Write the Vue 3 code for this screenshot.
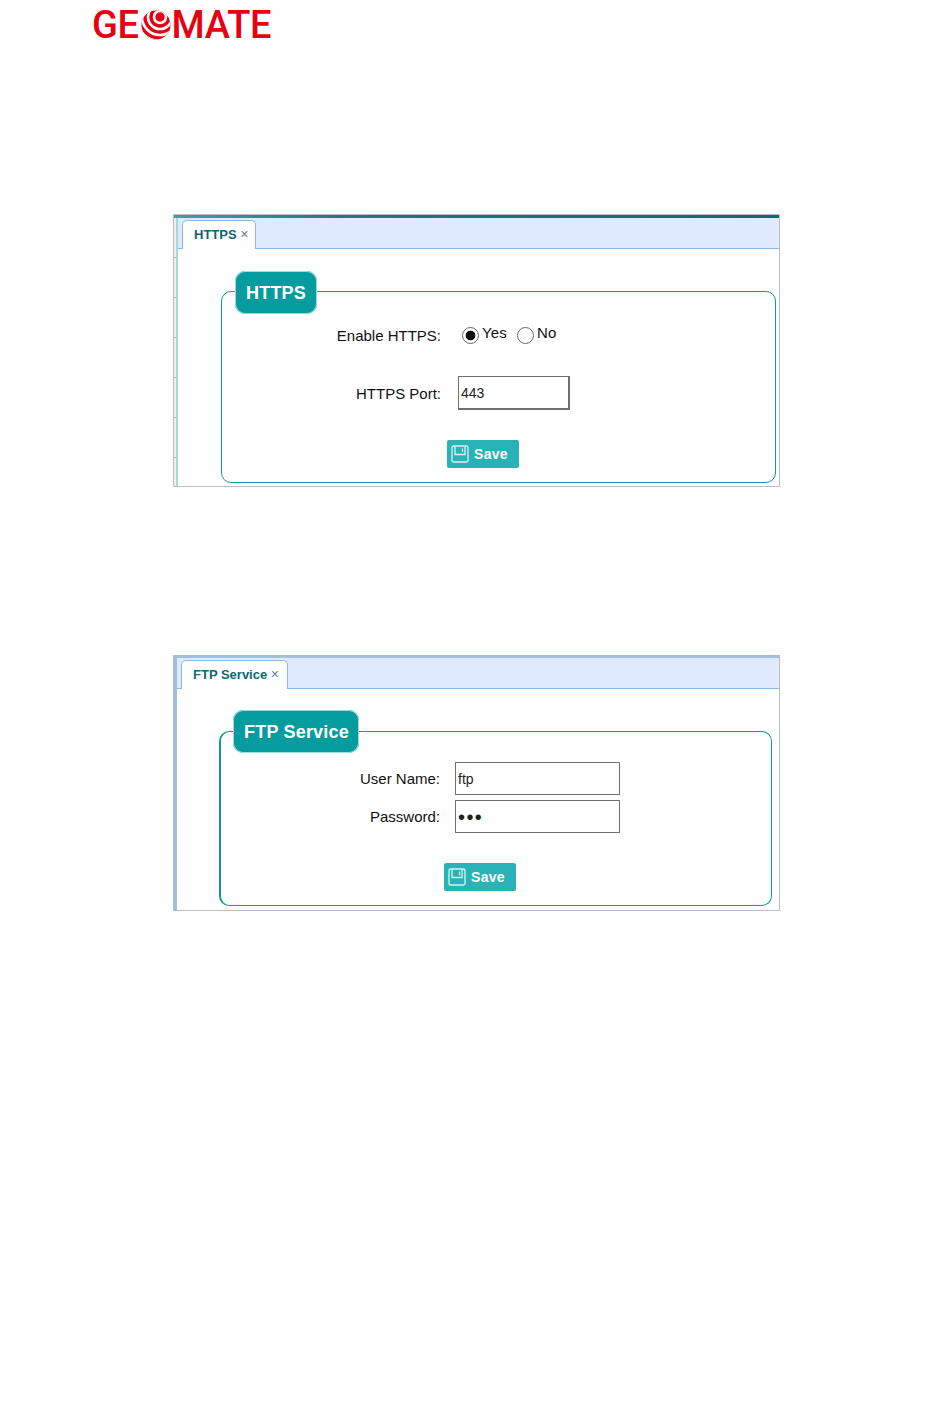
<template>
  <div class="page">
    <div class="logo">
      <span class="logo-text">GE</span>
      <svg class="globe" width="30" height="30" viewBox="0 0 30 30">
        <defs>
          <clipPath id="ball"><circle cx="15" cy="15" r="14.5" /></clipPath>
        </defs>
        <g clip-path="url(#ball)">
          <rect width="30" height="30" fill="#e60012" />
          <g fill="none" stroke="#fff" stroke-width="2.6">
            <circle cx="19" cy="7" r="6" />
            <circle cx="19" cy="7" r="12" />
            <circle cx="19" cy="7" r="18" />
            <circle cx="19" cy="7" r="24" />
          </g>
        </g>
      </svg>
      <span class="logo-text">MATE</span>
    </div>

    <section class="panel panel-https">
      <div class="topline"></div>
      <div class="inner">
        <div class="tabbar">
          <div class="tab">HTTPS <span class="tab-x">×</span></div>
        </div>
        <div class="group">
          <div class="legend">HTTPS</div>
          <div class="form">
            <label class="lbl">Enable HTTPS:</label>
            <div class="radios">
              <span class="radio on"></span><span class="opt">Yes</span>
              <span class="radio"></span><span class="opt">No</span>
            </div>
            <label class="lbl">HTTPS Port:</label>
            <input class="field" type="text" value="443" />
          </div>
          <button class="save">
            <svg width="18" height="18" viewBox="0 0 18 18" fill="none" stroke="#d6f3f3" stroke-width="1.3">
              <rect x="1" y="1" width="16" height="16" rx="1.5" />
              <path d="M4 1.5V9.5H14V1.5M11.5 3.5V7" />
            </svg>
            Save
          </button>
        </div>
      </div>
    </section>

    <section class="panel panel-ftp">
      <div class="inner">
        <div class="tabbar">
          <div class="tab">FTP Service <span class="tab-x">×</span></div>
        </div>
        <div class="group">
          <div class="legend">FTP Service</div>
          <div class="form">
            <label class="lbl">User Name:</label>
            <input class="field" type="text" value="ftp" />
            <label class="lbl">Password:</label>
            <input class="field pass" type="password" value="ftp" />
          </div>
          <button class="save">
            <svg width="18" height="18" viewBox="0 0 18 18" fill="none" stroke="#d6f3f3" stroke-width="1.3">
              <rect x="1" y="1" width="16" height="16" rx="1.5" />
              <path d="M4 1.5V9.5H14V1.5M11.5 3.5V7" />
            </svg>
            Save
          </button>
        </div>
      </div>
    </section>
  </div>
</template>

<script setup>
</script>

<style>
html,
body {
  background: #fff;
}
</style>

<style scoped>
.page {
  width: 950px;
  height: 1408px;
  overflow: hidden;
  background: #fff;
  font-family: "Liberation Sans", Arial, sans-serif;
  color: #111;
}

/* logo */
.logo {
  display: flex;
  align-items: center;
  height: 30px;
  margin: 10px 0 0 92px;
  color: #e60012;
}
.logo-text {
  font-family: Roboto, sans-serif;
  font-weight: 500;
  font-size: 38px;
  line-height: 30px;
  letter-spacing: -0.4px;
}
.globe {
  margin: 0 1px 0 2px;
}

/* panels */
.panel {
  box-sizing: border-box;
  width: 607px;
  margin-left: 173px;
  border: 1px solid #bdbdbd;
}
.panel-https {
  height: 273px;
  margin-top: 174px;
  background: repeating-linear-gradient(180deg, transparent 0 39px, #8fc7c7 39px 40px) left 0 top 3px / 2px 100% no-repeat, #eef1f1;
}
.panel-ftp {
  height: 256px;
  margin-top: 168px;
  border-top: 3px solid #a3bfdc;
  border-left: 4px solid #a3c0d6;
}
.topline {
  height: 3px;
  background: linear-gradient(90deg, #3aa39c 0, #0c7f80 30%, #0a6b73 100%);
}
.panel-https .inner {
  margin-left: 2px;
  height: 268px;
  background: #fff;
  border-left: 2px solid #a4dcdc;
}
.tabbar {
  box-sizing: border-box;
  display: flex;
  align-items: flex-end;
  height: 31px;
  background: #dfeaff;
  border-bottom: 1px solid #8db8ea;
}
.tab {
  box-sizing: border-box;
  height: 29px;
  margin-bottom: -1px;
  margin-left: 4px;
  padding-top: 6px;
  padding-left: 11px;
  background: #fff;
  border: 1px solid #8db8ea;
  border-bottom: none;
  border-radius: 5px 5px 0 0;
  color: #0d6670;
  font-size: 13px;
  font-weight: bold;
  line-height: 15px;
  white-space: nowrap;
}
.panel-https .tab {
  width: 74px;
}
.panel-ftp .tab {
  width: 107px;
}
.tab-x {
  color: #5a7fa5;
  font-weight: normal;
  font-size: 14px;
}

/* group box */
.group {
  box-sizing: border-box;
  border: 1px solid #12989c;
  border-radius: 10px;
}
.panel-https .group {
  height: 192px;
  margin: 42px 3px 0 43px;
}
.panel-ftp .group {
  height: 175px;
  margin: 42px 7px 0 42px;
  border-left-width: 2px;
}
.legend {
  box-sizing: border-box;
  width: max-content;
  height: 43px;
  margin: -21px 0 0 13px;
  padding: 0 11px;
  background: #059c9f;
  border-radius: 10px;
  box-shadow: 0 0 0 1px #9fdcdc inset;
  color: #fff;
  font-size: 18px;
  font-weight: bold;
  line-height: 45px;
  letter-spacing: 0.2px;
}
.panel-ftp .legend {
  margin: -22px 0 0 12px;
  padding-right: 10px;
}

.form {
  display: grid;
  align-items: center;
}
.panel-https .form {
  grid-template-columns: 219px 112px;
  grid-template-rows: 22px 34px;
  column-gap: 17px;
  row-gap: 30px;
  margin-top: 10px;
}
.panel-ftp .form {
  grid-template-columns: 219px 165px;
  grid-template-rows: 33px 33px;
  column-gap: 15px;
  row-gap: 5px;
  margin-top: 9px;
}
.lbl {
  font-size: 15px;
  text-align: right;
}
.radios {
  display: flex;
  align-items: center;
  padding-left: 4px;
  font-size: 15px;
}
.radio {
  box-sizing: border-box;
  flex: none;
  width: 17px;
  height: 17px;
  border: 1px solid #666;
  border-radius: 50%;
  background: #fff;
}
.radio.on {
  background: radial-gradient(circle, #111 0 4.5px, #fff 5.2px);
}
.opt {
  margin: -5px 10px 0 3px;
  letter-spacing: 0.2px;
}
.field {
  box-sizing: border-box;
  width: 100%;
  height: 100%;
  padding: 0 2px;
  border: 1px solid #707070;
  border-radius: 0;
  outline: none;
  background: #fff;
  color: #222;
  font-family: "Liberation Sans", Arial, sans-serif;
  font-size: 14px;
}
.pass {
  padding-top: 2px;
  font-size: 20px;
  letter-spacing: 1.4px;
}
.panel-https .field {
  border-right-width: 2px;
  border-bottom-width: 2px;
}

.save {
  display: flex;
  align-items: center;
  gap: 5px;
  box-sizing: border-box;
  width: 72px;
  height: 28px;
  margin-top: 30px;
  padding: 0 0 0 4px;
  border: none;
  border-radius: 2px;
  background: #29b3b6;
  color: #fff;
  font-family: "Liberation Sans", Arial, sans-serif;
  font-size: 14px;
  font-weight: bold;
  letter-spacing: 0.3px;
}
.panel-https .save {
  margin-left: 225px;
}
.panel-ftp .save {
  margin-left: 223px;
}
</style>
